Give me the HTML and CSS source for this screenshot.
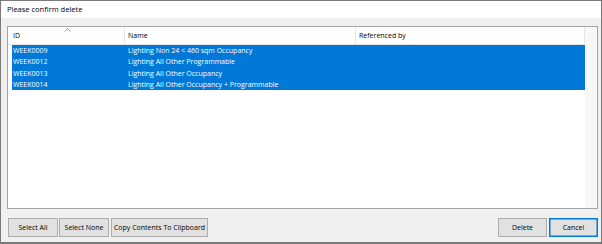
FILE: index.html
```html
<!DOCTYPE html>
<html>
<head>
<meta charset="utf-8">
<link rel="stylesheet" href="styles.css">
</head>
<body>
<div class="window">
  <div class="titlebar">Please confirm delete</div>
  <div class="content">
    <div class="list">
      <div class="table">
        <div class="header">
          <div class="hcell c-id">ID
            <svg class="sort" width="7" height="4" viewBox="0 0 7 4"><polyline points="0.5,3.5 3.5,0.5 6.5,3.5" fill="none" stroke="#9a9a9a" stroke-width="1"/></svg>
          </div>
          <div class="hcell c-name">Name</div>
          <div class="hcell c-ref">Referenced by</div>
        </div>
        <div class="rows">
          <div class="row"><div class="cell r-id">WEEK0009</div><div class="cell r-name">Lighting Non 24 &lt; 460 sqm Occupancy</div><div class="cell r-ref"></div></div>
          <div class="row"><div class="cell r-id">WEEK0012</div><div class="cell r-name">Lighting All Other Programmable</div><div class="cell r-ref"></div></div>
          <div class="row"><div class="cell r-id">WEEK0013</div><div class="cell r-name">Lighting All Other Occupancy</div><div class="cell r-ref"></div></div>
          <div class="row"><div class="cell r-id">WEEK0014</div><div class="cell r-name">Lighting All Other Occupancy + Programmable</div><div class="cell r-ref"></div></div>
        </div>
      </div>
      <div class="strip"></div>
    </div>
    <div class="buttons">
      <div class="group">
        <button class="btn w-all">Select All</button>
        <button class="btn w-none">Select None</button>
        <button class="btn w-copy">Copy Contents To Clipboard</button>
      </div>
      <div class="group right">
        <button class="btn w-del">Delete</button>
        <button class="btn w-cancel default">Cancel</button>
      </div>
    </div>
  </div>
</div>
</body>
</html>
```
FILE: styles.css
```css
* { box-sizing: border-box; }
html, body { margin: 0; padding: 0; background: #f0f0f0; }
body { font-family: "Open Sans", "Noto Sans", sans-serif; color: #000; }
.window {
  width: 602px; height: 244px;
  border: 1px solid #7a7a7a;
  border-bottom-width: 2px;
  display: flex; flex-direction: column;
  background: #f0f0f0;
}
.titlebar {
  height: 17px; background: #fff;
  font-size: 7.5px; line-height: 17px;
  padding-left: 6px;
}
.content {
  flex: 1;
  display: flex; flex-direction: column;
  padding: 8px 3px 0 6px;
}
.list {
  height: 183px;
  border: 1px solid #a5a5a5;
  background: #fff;
  display: flex;
}
.table { flex: 1; display: flex; flex-direction: column; }
.strip { width: 12px; background: #f7f7f7; }
.header {
  height: 18px;
  display: flex;
  border-bottom: 1px solid #e5e5e5;
  font-size: 7px;
}
.hcell {
  position: relative;
  line-height: 17px;
  padding-left: 3px;
  border-right: 1px solid #e5e5e5;
  white-space: nowrap;
}
.hcell.c-id { width: 117px; padding-left: 5px; }
.hcell.c-name { width: 231px; }
.hcell.c-ref { flex: 1; }
.sort { position: absolute; left: 56px; top: 1px; }
.rows { padding-left: 4px; }
.row {
  display: flex;
  height: 11.25px;
  background: #0078d7;
  color: #fff;
  font-size: 7px;
  line-height: 11.25px;
  white-space: nowrap;
}
.cell { overflow: hidden; }
.r-id { width: 113px; padding-left: 1px; }
.r-name { width: 231px; padding-left: 3px; }
.r-ref { flex: 1; }
.buttons {
  margin-top: 9px;
  display: flex;
  justify-content: space-between;
  padding-left: 1px;
}
.group { display: flex; gap: 1px; }
.group.right { gap: 2px; }
.btn {
  height: 19px;
  margin: 0; padding: 0;
  background: #e1e1e1;
  border: 1px solid #adadad;
  font-family: "Open Sans", "Noto Sans", sans-serif;
  font-size: 7px;
  color: #000;
  text-align: center;
}
.w-all { width: 50px; }
.w-none { width: 50px; }
.w-copy { width: 97px; margin-left: 1px; }
.w-del { width: 49px; }
.w-cancel { width: 49px; }
.btn.default { border-color: #0078d7; box-shadow: inset 0 0 0 0.5px #0078d7; }
```
